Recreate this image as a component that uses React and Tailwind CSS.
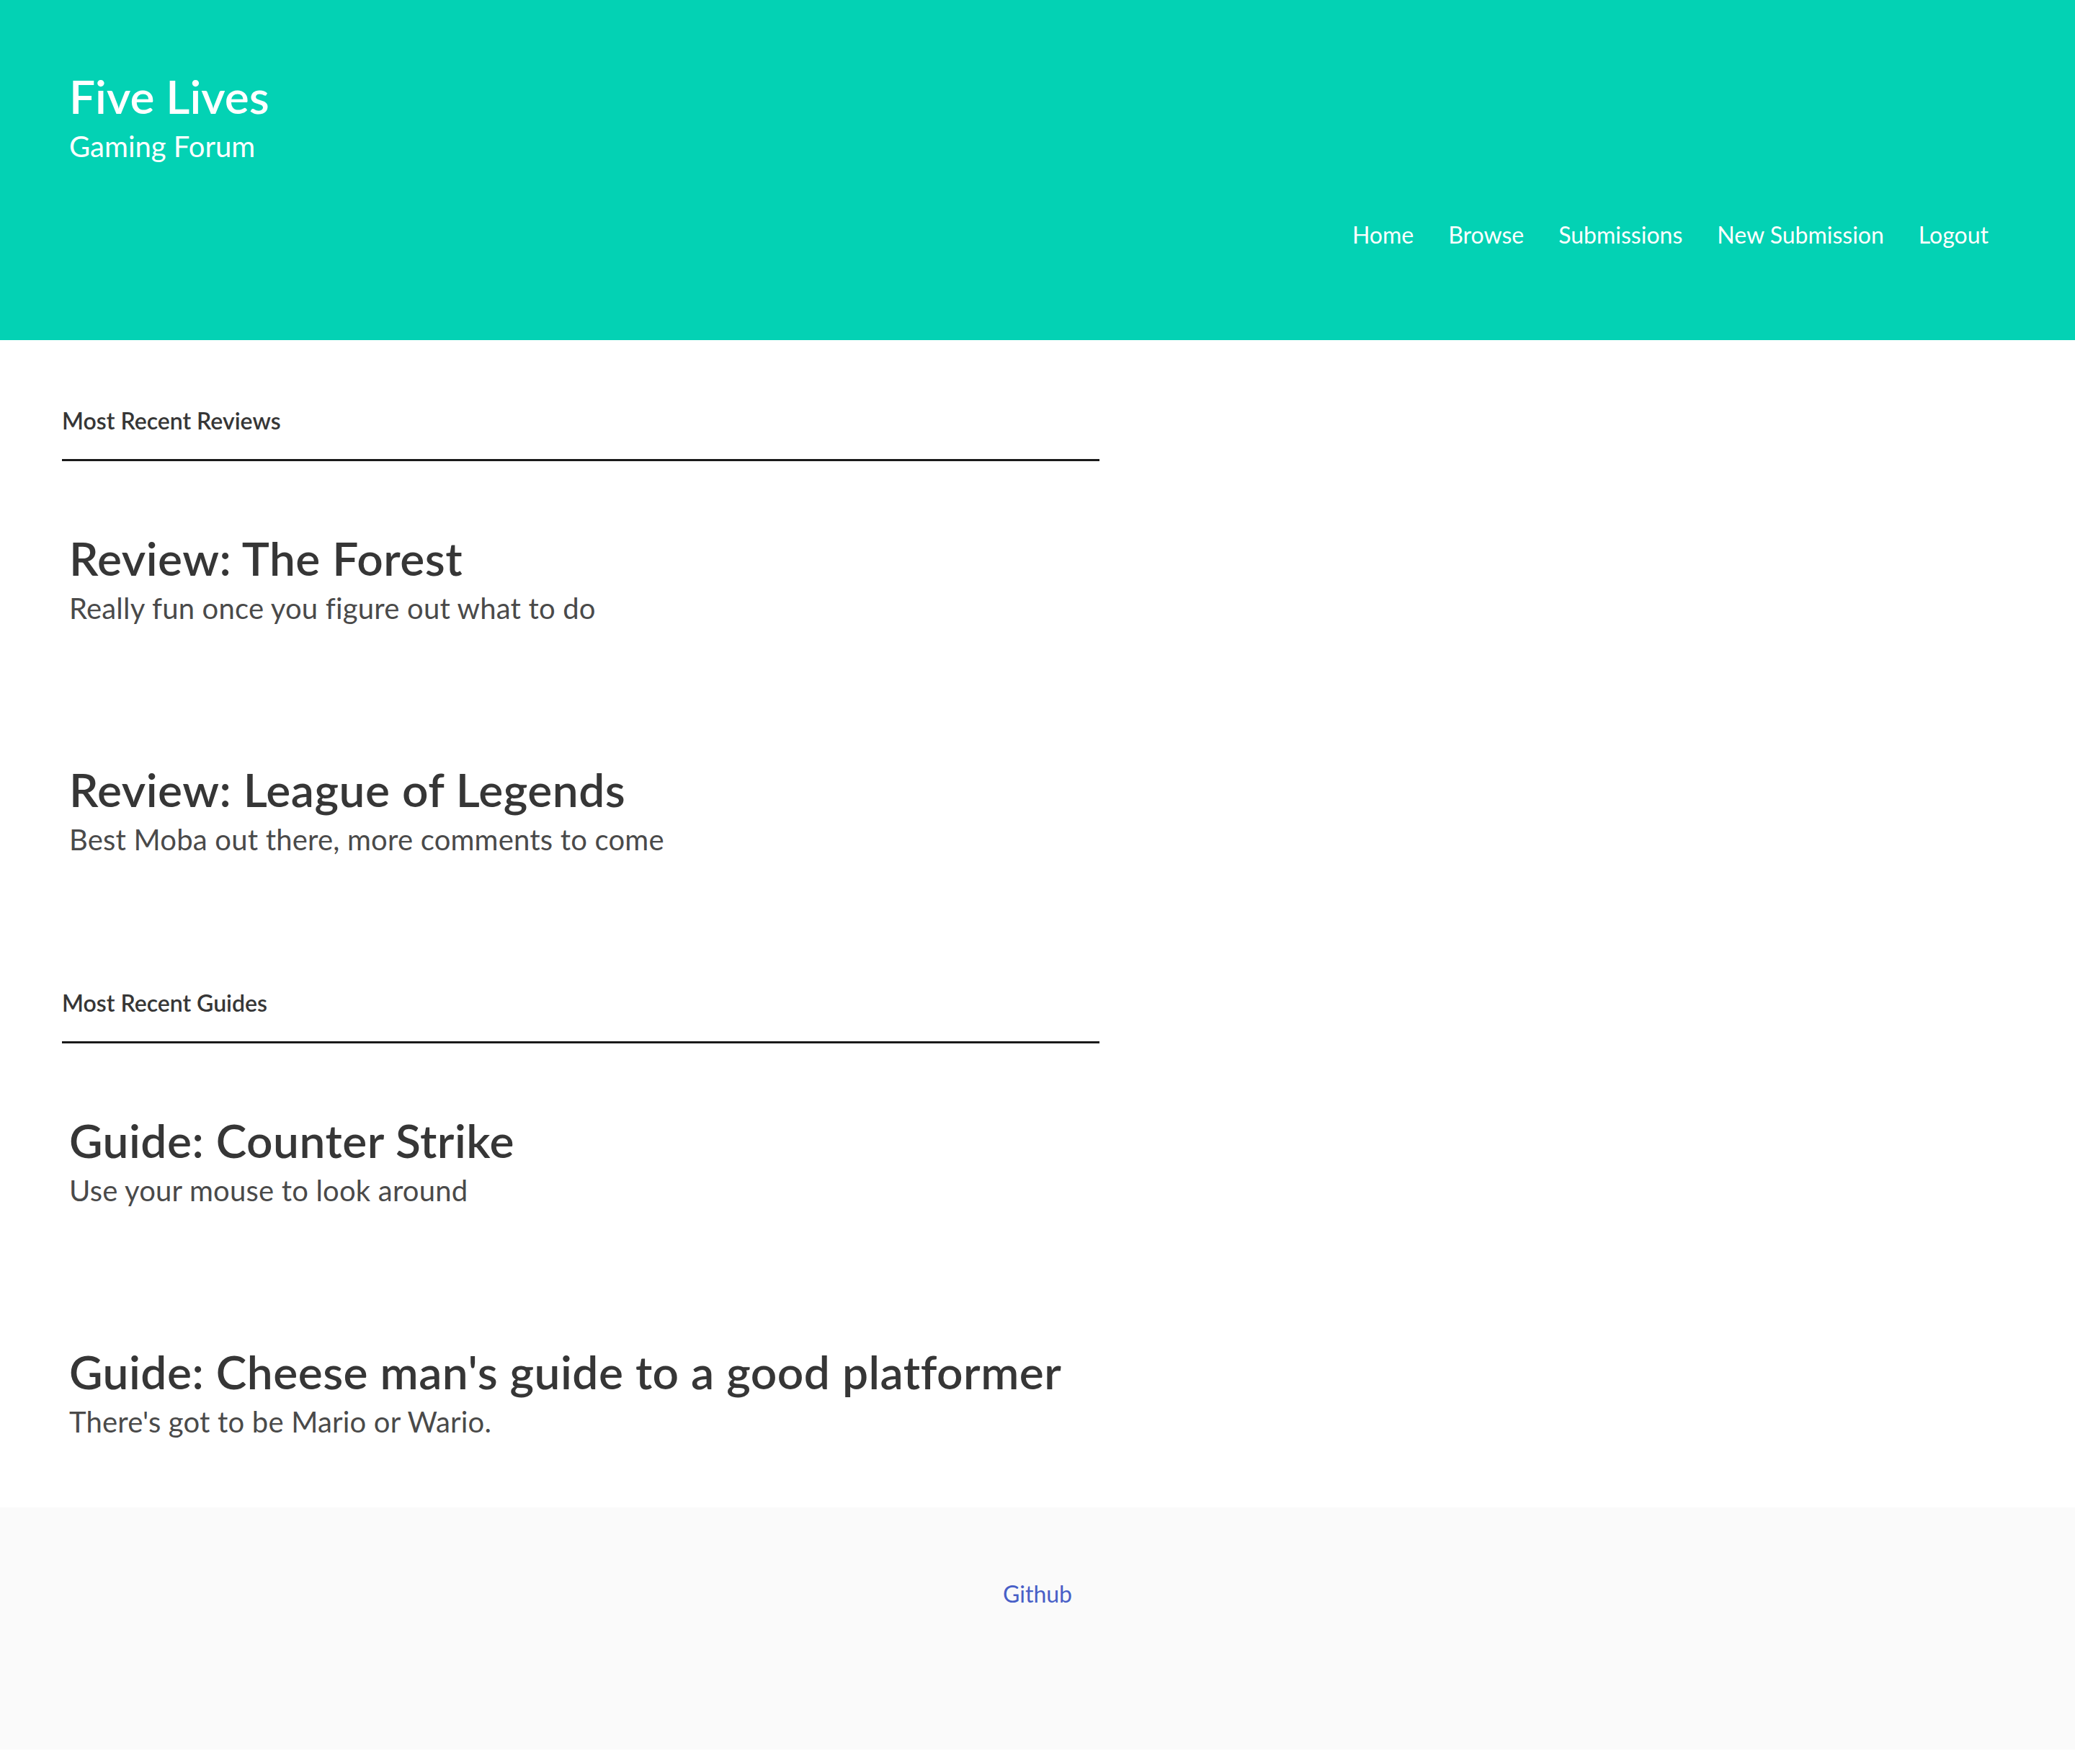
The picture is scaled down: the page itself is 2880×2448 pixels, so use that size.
import React from "react";

const links = ["Home", "Browse", "Submissions", "New Submission", "Logout"];

const reviews = [
  { title: "Review: The Forest", text: "Really fun once you figure out what to do" },
  { title: "Review: League of Legends", text: "Best Moba out there, more comments to come" },
];

const guides = [
  { title: "Guide: Counter Strike", text: "Use your mouse to look around" },
  { title: "Guide: Cheese man's guide to a good platformer", text: "There's got to be Mario or Wario." },
];

const Post = ({ post, first }) => (
  <div className={`pl-[10px] ${first ? "mt-[99px]" : "mt-[191px]"}`}>
    <h2 className="whitespace-nowrap text-[64px] leading-[72px] font-semibold tracking-[0.008em] text-[#363636]">
      {post.title}
    </h2>
    <p className="mt-[8px] whitespace-nowrap text-[40px] leading-[50px] tracking-[0.005em] text-[#4a4a4a]">
      {post.text}
    </p>
  </div>
);

const Section = ({ heading, posts, className }) => (
  <section className={className}>
    <h3 className="text-[32px] leading-[48px] font-semibold text-[#363636]">{heading}</h3>
    <div className="mt-[29px] h-[3px] bg-[#1a1a1a]" />
    {posts.map((p, i) => (
      <Post key={p.title} post={p} first={i === 0} />
    ))}
  </section>
);

const App = () => {
  return (
    <div className="w-[2880px] bg-white font-['Lato',sans-serif]">
      <header className="h-[472px] bg-[#03d2b4] px-[96px] pt-[98px]">
        <h1 className="text-[64px] leading-[72px] font-semibold text-white">Five Lives</h1>
        <p className="mt-[8px] text-[40px] leading-[50px] text-white">Gaming Forum</p>
        <nav className="mt-[74px] flex justify-end">
          {links.map((l) => (
            <a key={l} href="#" className="px-[24px] text-[32px] leading-[48px] text-white">
              {l}
            </a>
          ))}
        </nav>
      </header>

      <main className="w-[1440px] ml-[86px] pt-[88px] pb-[94px]">
        <Section heading="Most Recent Reviews" posts={reviews} />
        <Section heading="Most Recent Guides" posts={guides} className="mt-[178px]" />
      </main>

      <footer className="h-[336px] bg-[#fafafa] pt-[96px] flex justify-center">
        <a href="#" className="text-[32px] leading-[48px] h-[48px] text-[#485fc7]">
          Github
        </a>
      </footer>
    </div>
  );
};

export default App;
